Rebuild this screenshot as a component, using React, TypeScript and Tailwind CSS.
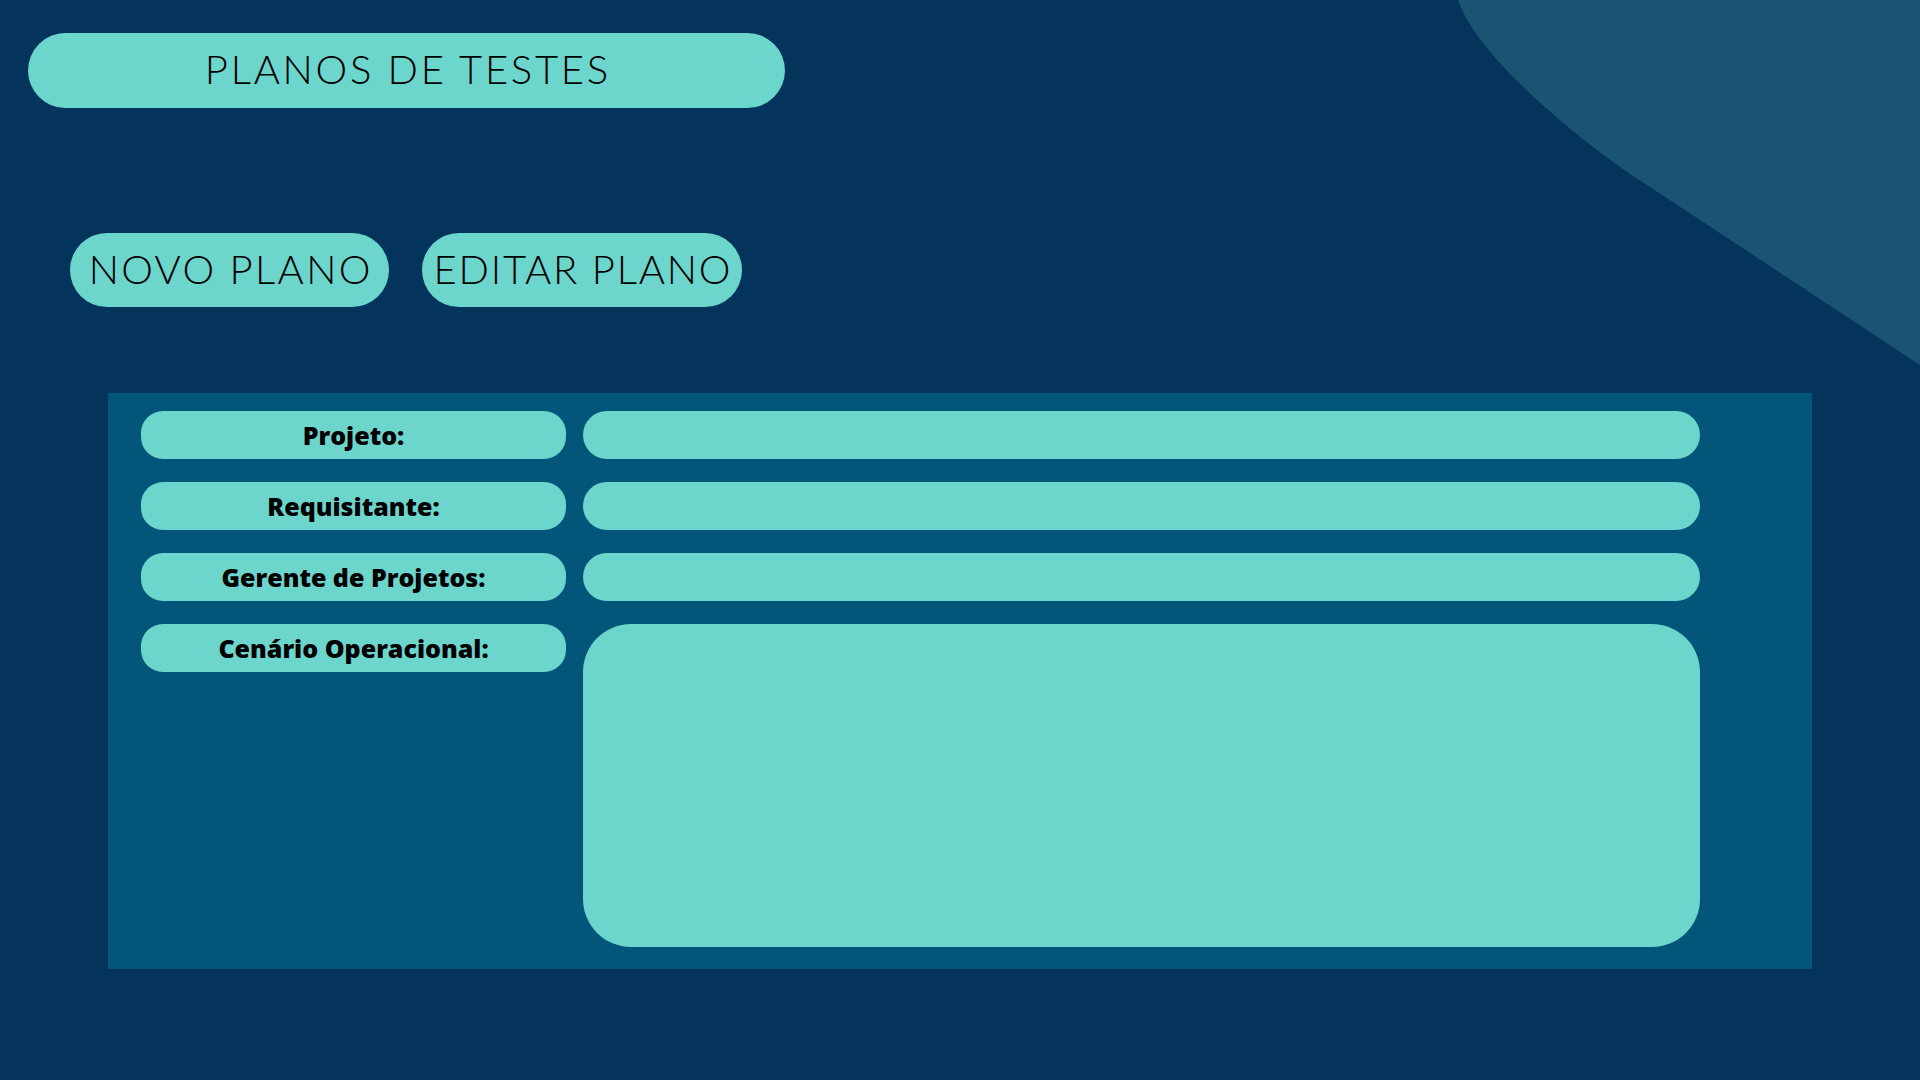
import React from "react";

const labels = ["Projeto:", "Requisitante:", "Gerente de Projetos:"];

export default function App() {
  return (
    <div className="relative w-[1920px] h-[1080px] overflow-hidden bg-[#04345c]">
      <svg
        className="absolute top-0 left-0 pointer-events-none"
        width="1920"
        height="1080"
        viewBox="0 0 1920 1080"
      >
        <path
          d="M1458 0 C1478 60 1590 149 1650 187 L1920 365 L1920 0 Z"
          fill="#1a5472"
        />
      </svg>

      <div className="relative flex flex-col">
        <div className="ml-[28px] mt-[33px] w-[757px] h-[75px] rounded-full bg-[#6cd5cc] flex items-center justify-center">
          <span
            className="text-[40px] font-light tracking-[0.068em] text-black leading-none pl-[0.068em] mb-[4px]"
            style={{ fontFamily: "Lato, 'Noto Sans', sans-serif" }}
          >
            PLANOS DE TESTES
          </span>
        </div>

        <div className="ml-[70px] mt-[125px] flex gap-[33px]">
          <div className="w-[319px] h-[74px] rounded-full bg-[#6cd5cc] flex items-center justify-center">
            <span
              className="text-[40px] font-light tracking-[0.058em] text-black leading-none pl-[0.058em] whitespace-nowrap mb-[2px]"
              style={{ fontFamily: "Lato, 'Noto Sans', sans-serif" }}
            >
              NOVO PLANO
            </span>
          </div>
          <div className="w-[320px] h-[74px] rounded-full bg-[#6cd5cc] flex items-center justify-center">
            <span
              className="text-[40px] font-light tracking-[0.045em] text-black leading-none pl-[0.045em] whitespace-nowrap mb-[2px]"
              style={{ fontFamily: "Lato, 'Noto Sans', sans-serif" }}
            >
              EDITAR PLANO
            </span>
          </div>
        </div>

        <div className="ml-[108px] mt-[86px] w-[1704px] h-[576px] bg-[#03567a] pt-[18px] pl-[33px]">
          <div className="grid grid-cols-[425px_1117px] gap-x-[17px] gap-y-[23px]">
            {labels.map((l) => (
              <React.Fragment key={l}>
                <div className="h-[48px] rounded-[22px] bg-[#6cd5cc] flex items-center justify-center">
                  <span
                    className="text-[25px] font-extrabold text-black leading-none"
                    style={{ fontFamily: "'Open Sans', sans-serif" }}
                  >
                    {l}
                  </span>
                </div>
                <div className="h-[48px] rounded-full bg-[#6cd5cc]" />
              </React.Fragment>
            ))}
            <div className="h-[48px] rounded-[22px] bg-[#6cd5cc] flex items-center justify-center self-start">
              <span
                className="text-[25px] font-extrabold text-black leading-none"
                style={{ fontFamily: "'Open Sans', sans-serif" }}
              >
                Cenário Operacional:
              </span>
            </div>
            <div className="h-[323px] rounded-[48px] bg-[#6cd5cc]" />
          </div>
        </div>
      </div>
    </div>
  );
}
